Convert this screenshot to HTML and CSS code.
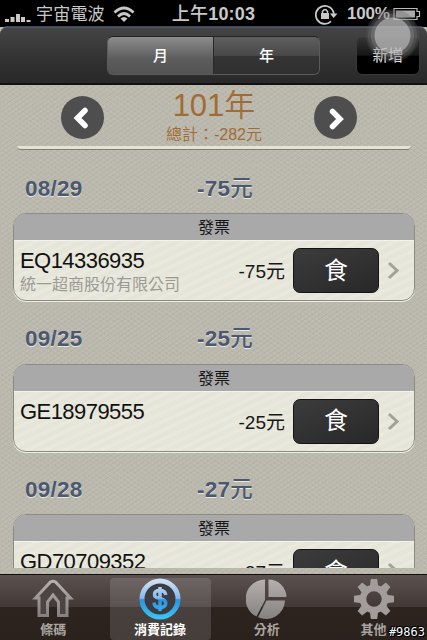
FILE: index.html
```html
<!DOCTYPE html>
<html lang="zh-Hant">
<head>
<meta charset="utf-8">
<title>消費記錄</title>
<link rel="stylesheet" href="styles.css">
</head>
<body>
<div class="phone">
  <header class="status">
    <div class="carrier">
      <svg class="signal" width="26" height="12" viewBox="0 0 26 12" fill="#c8c8c8"><path d="M0 7h4v3H0zM5.500 5h4v5h-4zM11 2h4v8h-4zM16 5h4v5h-4zM21.500 8h4v2h-4z"/></svg>
      <span class="carrier-name">宇宙電波</span>
      <svg class="wifi" width="22" height="17" viewBox="0 0 22 17" fill="none" stroke="#c8c8c8" stroke-width="2.800"><path d="M1.500 6.500Q11-2.500 20.500 6.500M5 10.500Q11 4.500 17 10.500"/><path d="M7.500 12.500Q11 9.500 14.500 12.500L11 16z" fill="#c8c8c8" stroke="none"/></svg>
    </div>
    <div class="clock"><span>上午</span>10:03</div>
    <div class="power">
      <svg width="23" height="21" viewBox="0 0 23 21"><path d="M16 17.400A9 9 0 1 1 18.800 10" fill="none" stroke="#c8c8c8" stroke-width="1.800"/><path d="M14.800 9.500h7.700L18.700 14z" fill="#c8c8c8"/><path d="M6 9h8v6H6z" fill="#c8c8c8"/><path d="M7.500 9V7.500q2.500-4 5 0V9" fill="none" stroke="#c8c8c8" stroke-width="1.500"/></svg>
      <span class="percent">100%</span>
      <svg width="28" height="14" viewBox="0 0 28 14"><path d="M1 1.500h23v3h2.500v5H24v3H1z" fill="none" stroke="#bbb" stroke-width="1.200"/><path d="M3 3.500h19v7H3z" fill="#aaa"/></svg>
    </div>
  </header>
  <nav class="navbar">
    <div class="segments"><button class="segment on">月</button><button class="segment">年</button></div>
    <button class="add">新增</button>
  </nav>
  <div class="touch"></div>
  <section class="summary">
    <button class="arrow"><svg width="42" height="42" viewBox="0 0 42 42"><path d="M24 13.500L16.500 21l7.500 7.500" /></svg></button>
    <div class="total"><h1>101年</h1><p>總計：-282元</p></div>
    <button class="arrow"><svg width="42" height="42" viewBox="0 0 42 42"><path d="M18.500 14.500L26 22l-7.500 7.500" /></svg></button>
  </section>
  <main class="list">
    <div class="card-tail"></div>
    <div class="day"><span>08/29</span><b>-75<i>元</i></b></div>
    <article class="card">
      <h2>發票</h2>
      <div class="row"><div class="invoice"><strong>EQ14336935</strong><small>統一超商股份有限公司</small></div><span class="amount">-75元</span><button class="food">食</button><svg class="chevron" width="13" height="19" viewBox="0 0 13 19"><path d="M2 2l8 7.500L2 17"/></svg></div>
    </article>
    <div class="day"><span>09/25</span><b>-25<i>元</i></b></div>
    <article class="card">
      <h2>發票</h2>
      <div class="row"><div class="invoice"><strong>GE18979555</strong></div><span class="amount">-25元</span><button class="food">食</button><svg class="chevron" width="13" height="19" viewBox="0 0 13 19"><path d="M2 2l8 7.500L2 17"/></svg></div>
    </article>
    <div class="day"><span>09/28</span><b>-27<i>元</i></b></div>
    <article class="card">
      <h2>發票</h2>
      <div class="row"><div class="invoice"><strong>GD70709352</strong></div><span class="amount">-27元</span><button class="food">食</button><svg class="chevron" width="13" height="19" viewBox="0 0 13 19"><path d="M2 2l8 7.500L2 17"/></svg></div>
    </article>
  </main>
  <footer class="tabs">
    <svg class="defs" width="0" height="0"><defs>
      <linearGradient id="metal" x1="0" y1="0" x2="0" y2="1"><stop offset="0" stop-color="#b5b0ae"/><stop offset="1" stop-color="#858180"/></linearGradient>
      <linearGradient id="blue" gradientUnits="userSpaceOnUse" x1="0" y1="2" x2="0" y2="40"><stop offset="0" stop-color="#cfe2f6"/><stop offset=".48" stop-color="#86b9ec"/><stop offset=".52" stop-color="#2e91df"/><stop offset="1" stop-color="#37c5f5"/></linearGradient>
    </defs></svg>
    <a class="tab"><svg width="42" height="42" viewBox="0 0 42 42"><path d="M3.500 20L18.500 4q2.500-1.600 5 0L38.500 20H35v17.500h-8.500V24L21 17l-5.500 7v13.500H7V20z" fill="#4d4340" stroke="url(#metal)" stroke-width="3"/></svg><span>條碼</span></a>
    <a class="tab active"><svg width="42" height="42" viewBox="0 0 42 42"><circle cx="21" cy="21" r="18" fill="#3c3c42" stroke="url(#blue)" stroke-width="5"/><path d="M26.800 17C26.300 13.700 24.200 12.500 21 12.500c-3.500 0-5.500 1.500-5.500 4C15.500 22.500 26.800 19 26.800 25c0 2.700-2.200 4.500-5.800 4.500-3.400 0-5.700-1.500-6-5M21 9v24" fill="none" stroke="url(#blue)" stroke-width="3.500"/></svg><span>消費記錄</span></a>
    <a class="tab"><svg width="42" height="42" viewBox="0 0 42 42" fill="url(#metal)"><path d="M19 1.500V22L10.500 38.500A19.500 19.500 0 0 1 19 1.500zM22.500 1.500A18 18 0 0 1 40.500 19h-18zM20.500 22.500h18.500A19 19 0 0 1 12 39.200z"/></svg><span>分析</span></a>
    <a class="tab"><svg width="42" height="42" viewBox="-21 -21 42 42"><g fill="#a29d9b"><path d="M-3.200-20h6.400l1 8h-8.400z"/><path d="M-3.200-20h6.400l1 8h-8.400z" transform="rotate(45)"/><path d="M-3.200-20h6.400l1 8h-8.400z" transform="rotate(90)"/><path d="M-3.200-20h6.400l1 8h-8.400z" transform="rotate(135)"/><path d="M-3.200-20h6.400l1 8h-8.400z" transform="rotate(180)"/><path d="M-3.200-20h6.400l1 8h-8.400z" transform="rotate(225)"/><path d="M-3.200-20h6.400l1 8h-8.400z" transform="rotate(270)"/><path d="M-3.200-20h6.400l1 8h-8.400z" transform="rotate(315)"/></g><circle r="11" fill="none" stroke="#a29d9b" stroke-width="6.500"/></svg><span>其他</span></a>
    <div class="stamp">#9863</div>
  </footer>
</div>
</body>
</html>
```
FILE: styles.css
```css
* { box-sizing: border-box; }
body { margin: 0; background: #b9b7aa; }
body, button { font-family: "Liberation Sans", "Noto Sans CJK TC", sans-serif; }
button { border: 0; padding: 0; }
h1, h2, p { margin: 0; font-weight: 400; }
svg { display: block; flex: none; }
.phone {
  position: relative; width: 427px; height: 640px; overflow: hidden;
  display: flex; flex-direction: column;
  background-color: #bbb9ad;
  background-image:
    repeating-linear-gradient(35deg, rgba(255,255,240,.07) 0 1px, transparent 1px 4px),
    repeating-linear-gradient(-35deg, rgba(70,65,45,.06) 0 1px, transparent 1px 4px);
}
.status {
  height: 27px; flex: none; background: #000; color: #c8c8c8;
  display: grid; grid-template-columns: 150px 127px 150px; align-items: center;
}
.carrier { display: flex; align-items: center; padding-left: 5px; }
.signal { margin-top: 7px; }
.carrier-name { font-size: 17px; line-height: 26px; margin: 2px 0 0 5px; letter-spacing: .2px; }
.wifi { margin-left: 8px; }
.clock { font-size: 18px; line-height: 26px; text-align: center; font-weight: 700; letter-spacing: .2px; }
.clock span { font-weight: 500; }
.power { display: flex; align-items: center; padding-left: 38px; }
.percent { font-size: 17px; font-weight: 700; margin: 0 3px 0 9px; letter-spacing: -.2px; }
.navbar {
  height: 58px; flex: none; border-radius: 7px 7px 0 0; border-top: 1px solid #555;
  border-bottom: 2px solid #111;
  background: linear-gradient(#444, #303030 65%, #292929);
  box-shadow: 0 -4px 0 -3px #314866;
  display: flex; align-items: center; padding: 0 7px 0 107px; justify-content: space-between;
}
.segments { display: flex; width: 213px; height: 39px; border-radius: 6px; overflow: hidden; border: 1px solid #5b5b5b; border-top-color: #222; }
.segment { flex: 1; color: #fff; font-size: 15px; font-weight: 500; line-height: 35px; background: linear-gradient(#606060, #484848 50%, #343434 52%, #303030); }
.segment.on { background: linear-gradient(#8c8c8c, #5c5c5c 60%, #535353); border-right: 1px solid #282828; }
.add { width: 64px; height: 38px; border-radius: 6px; border: 1px solid #393939; color: #eee; font-size: 15.500px; line-height: 36px; background: linear-gradient(#333, #151515 48%, #000 50%); }
.touch {
  position: absolute; left: 364.500px; top: 8px; width: 55px; height: 55px; border-radius: 50%;
  background: radial-gradient(circle, rgba(185,185,185,.8) 0 17.500px, rgba(140,140,140,.55) 18.500px 21px, rgba(115,115,115,.42) 22px 24px, rgba(90,90,90,.3) 25px 26px, transparent 27px);
}
.summary { height: 61px; flex: none; display: flex; align-items: center; justify-content: space-between; padding: 4px 70px 0 61px; }
.arrow { width: 43px; height: 43px; border-radius: 50%; background: #4e4e4f; }
.arrow path { fill: none; stroke: #fff; stroke-width: 5.500; stroke-linecap: round; }
.total { text-align: center; color: #a06c35; padding-left: 10px; }
.total h1 { font-size: 31px; line-height: 33px; font-weight: 350; }
.total p { font-size: 16px; line-height: 24px; font-weight: 350; margin-top: 1px; }
.list { height: 422px; flex: none; overflow: hidden; padding: 0 12px 0 13px; }
.card-tail { height: 4px; margin: 0 4px; border-radius: 0 0 10px 10px; background: #e5e3d3; border-bottom: 1px solid #807e73; }
.day { height: 62.500px; display: flex; align-items: center; color: #4b5870; font-size: 22.500px; line-height: 25px; font-weight: 700; padding: 13px 0 0 12px; text-shadow: 0 1px 0 #e9e9e3; }
.day span { width: 172px; letter-spacing: .25px; }
.day b { font-size: 22.500px; letter-spacing: .2px; }
.day i { font-style: normal; font-weight: 500; }
.card-tail + .day { height: 63px; }
.card { height: 88px; border: 1px solid #8c8b83; border-radius: 13px; overflow: hidden; background: #e6e5d9; box-shadow: 0 1px 0 #efeee5; }
.card h2 { height: 27px; background: #a9a9aa; border-bottom: 1px solid #f4f3ed; color: #161616; text-align: center; font-size: 16px; line-height: 28px; }
.row { height: 59px; display: flex; align-items: center; padding: 0 14px 0 6px; background: repeating-linear-gradient(155deg, rgba(255,255,245,.15) 0 3px, transparent 4px 8px); }
.invoice { flex: 1; align-self: flex-start; padding-top: 8px; display: flex; flex-direction: column; }
.invoice strong { font-size: 22px; line-height: 24px; font-weight: 400; color: #111; letter-spacing: -.55px; }
.invoice small { font-size: 16px; line-height: 23px; color: #9b9b95; white-space: nowrap; }
.amount { font-size: 19px; color: #171717; margin-top: -2px; }
.food { width: 86px; height: 45px; margin-left: 8px; border: 1px solid #141414; border-radius: 7px; color: #fff; background: linear-gradient(160deg, #3c3c3c, #282828); font-size: 24px; line-height: 40px; }
.chevron { margin-left: 8px; }
.chevron path { fill: none; stroke: #a2a29b; stroke-width: 3; }
.tabs {
  position: relative; flex: none; height: 66px; margin-top: 6px; border-top: 1px solid #0d0b0b;
  background: linear-gradient(#5b514f, #423936 49%, #2d241f 50%, #2b221d);
  display: grid; grid-template-columns: repeat(4, 1fr); padding-top: 3px;
}
.defs { position: absolute; }
.tab { display: flex; flex-direction: column; align-items: center; color: #aaa5a2; font-size: 13px; font-weight: 700; line-height: 20px; border-radius: 4px; margin: 0 3px; }
.tab.active { color: #fff; background: rgba(255,255,255,.13); }
.stamp { position: absolute; right: 2px; bottom: 1px; color: #fff; font: 12px/13px "DejaVu Sans Mono", monospace; text-shadow: -1px 0 #000, 1px 0 #000, 0 -1px #000, 0 1px #000, 1px 1px #000, -1px -1px #000; }
```
